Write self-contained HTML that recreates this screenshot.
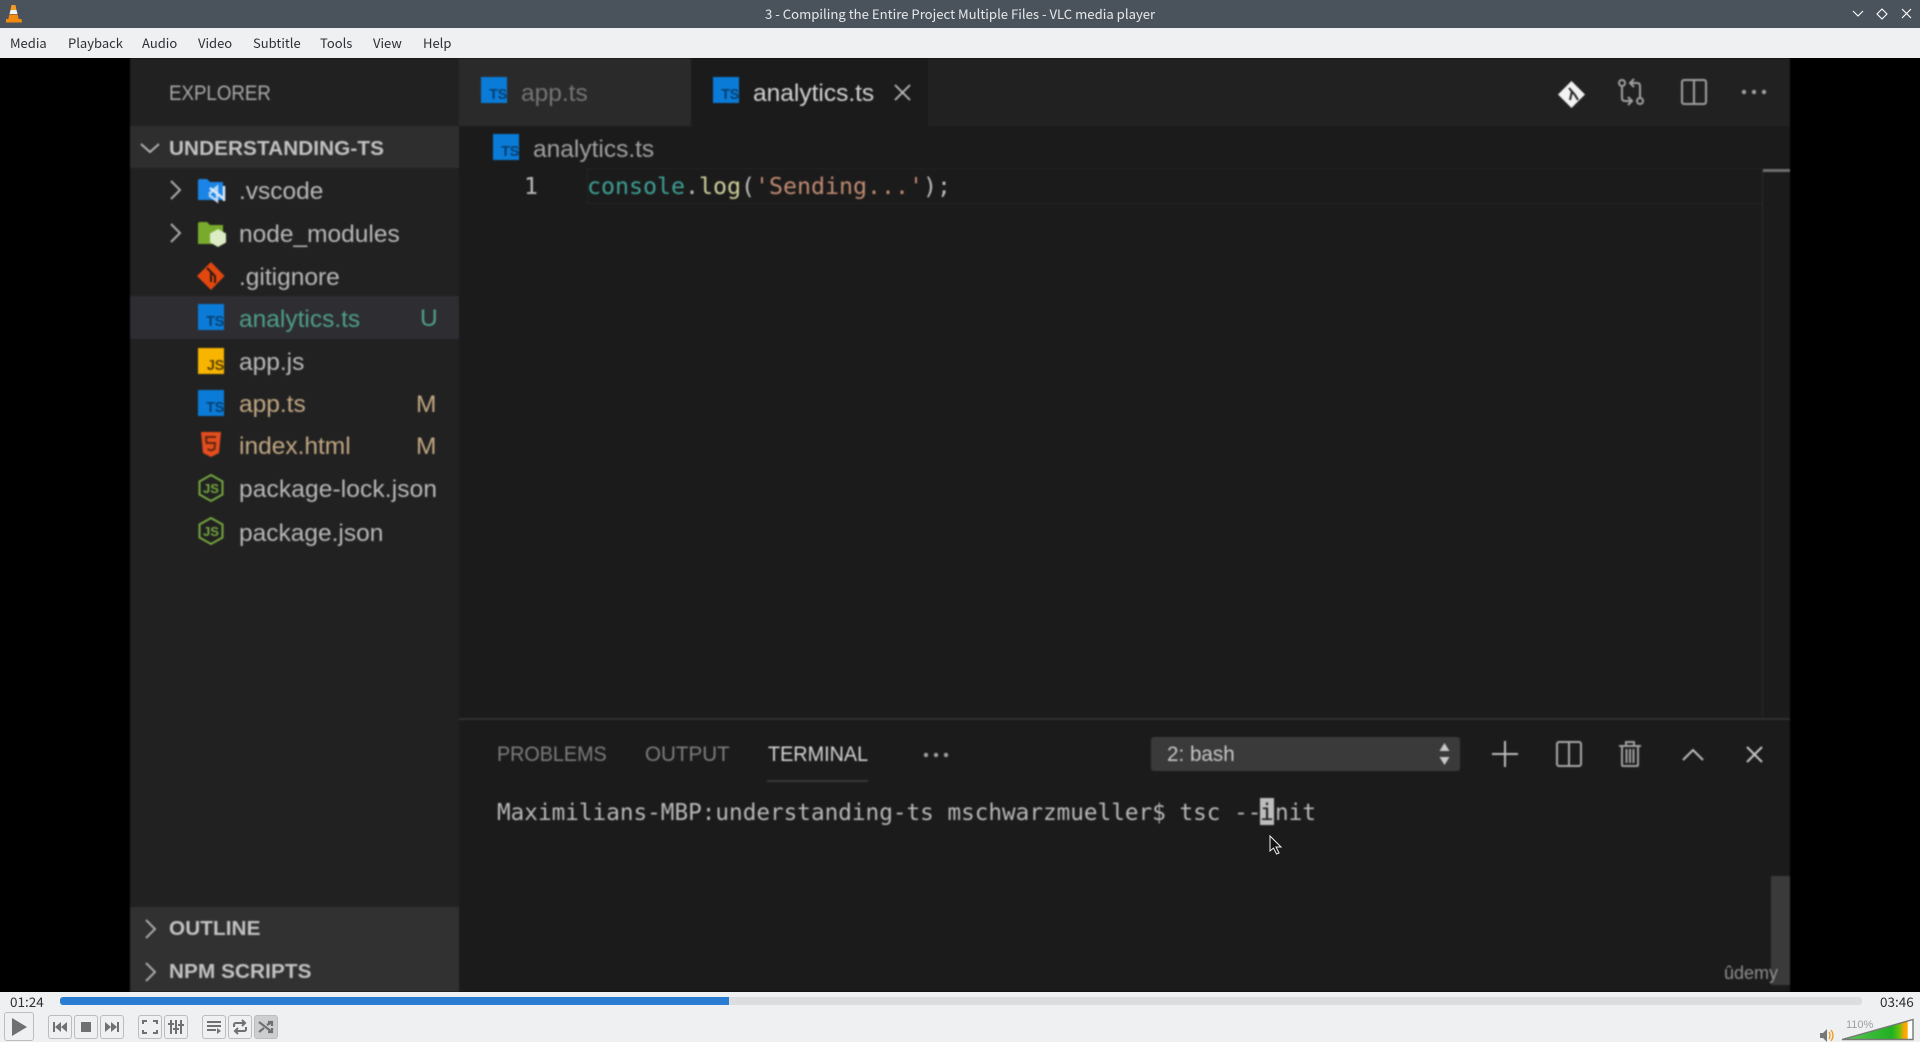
<!DOCTYPE html>
<html><head><meta charset="utf-8"><style>
html,body{margin:0;padding:0;width:1920px;height:1042px;overflow:hidden;background:#eff0f1}
*{box-sizing:border-box}
.a{position:absolute;white-space:nowrap}
.ui{font-family:"Noto Sans CJK JP","DejaVu Sans",sans-serif;font-size:13px;color:#2c3034;line-height:16px}
#v{position:absolute;left:0;top:58px;width:1920px;height:934px;background:#000;overflow:hidden}
#vi{position:absolute;left:0;top:-58px;width:1920px;height:1042px;filter:blur(.75px)}
.s{font-family:"Liberation Sans",sans-serif;font-size:24.500px;line-height:30px;color:#b8b8b8}
.h{font-weight:bold;font-size:20.700px;color:#c2c2c2;line-height:26px;letter-spacing:.1px}
.c{transform-origin:0 50%}
.m{font-family:"DejaVu Sans Mono",monospace}
.ts{position:absolute;width:26px;height:26px;background:#0a7cd8;color:#07406f;font:bold 14.500px/13px "Liberation Sans",sans-serif;text-align:right;padding:12px 0 0 0;letter-spacing:-.3px}
.btn{position:absolute;width:24px;height:24px;border:1px solid #bdbdbd;border-radius:3px;background:#eff0f1;top:1015px}
svg{position:absolute;overflow:visible}
</style></head><body>
<div class="a" style="left:0;top:0;width:1920px;height:28px;background:#4a535c"></div>
<svg style="left:6px;top:5px" width="16" height="18" viewBox="0 0 16 18"><path d="M5.500 0h4l1 5h-6z" fill="#f59a23"/><path d="M4.500 5h6l1 4h-8z" fill="#f3f3f3"/><path d="M3.300 9.500h8.400l1 4.500h-10.400z" fill="#f28a10"/><path d="M0 14h15.500l.5 3.500h-16z" fill="#f28a10"/></svg>
<div class="a ui" style="left:765px;top:6px;color:#e6e8ea;font-size:13.150px">3 - Compiling the Entire Project Multiple Files - VLC media player</div>
<svg style="left:1852px;top:8px" width="60" height="12" fill="none" stroke="#fff" stroke-width="1.100"><path d="M1 3l5 5 5-5"/><path d="M30 1l5 5-5 5-5-5z"/><path d="M50 1l9 9M59 1l-9 9"/></svg>
<div class="a" style="left:0;top:28px;width:1920px;height:30px;background:#eff0f1"></div>
<div class="a ui" style="left:10px;top:35px">Media</div>
<div class="a ui" style="left:68px;top:35px">Playback</div>
<div class="a ui" style="left:142px;top:35px">Audio</div>
<div class="a ui" style="left:198px;top:35px">Video</div>
<div class="a ui" style="left:253px;top:35px">Subtitle</div>
<div class="a ui" style="left:320px;top:35px">Tools</div>
<div class="a ui" style="left:373px;top:35px">View</div>
<div class="a ui" style="left:423px;top:35px">Help</div>

<div id="v"><div id="vi">
<div class="a" style="left:130px;top:58px;width:330px;height:934px;background:#212121"></div>
<div class="a" style="left:459px;top:58px;width:1331px;height:934px;background:#1b1b1b"></div>
<div class="a" style="left:459px;top:58px;width:1331px;height:68px;background:#212121"></div>
<div class="a" style="left:459px;top:58px;width:232px;height:68px;background:#2a2a2a"></div>
<div class="a" style="left:691px;top:58px;width:237px;height:68px;background:#1b1b1b"></div>

<div class="a s c" style="left:169px;top:79px;font-size:21.500px;line-height:28px;color:#a8a8a8;transform:scaleX(.87)">EXPLORER</div>
<div class="a" style="left:130px;top:126px;width:329px;height:42px;background:#2e2e2e"></div>
<svg style="left:140px;top:142px" width="20" height="12" fill="none" stroke="#b0b0b0" stroke-width="2"><path d="M1 2l9 8 9-8"/></svg>
<div class="a s h" style="left:169px;top:136px">UNDERSTANDING-TS</div>

<svg style="left:170px;top:180px" width="11" height="20" fill="none" stroke="#aaa" stroke-width="2"><path d="M1 1l9 9-9 9"/></svg>
<svg style="left:198px;top:179px" width="29" height="24"><path d="M0 2q0-2 2-2h7l3 3h13v18h-25z" fill="#1a85e6"/><path d="M11 15l8-7v14l-8-6" fill="none" stroke="#bcd9f5" stroke-width="2.500"/><path d="M12 9l14 11M26 7v15" stroke="#d8e9fa" stroke-width="2.500" fill="none"/></svg>
<div class="a s" style="left:239px;top:177px">.vscode</div>
<svg style="left:170px;top:223px" width="11" height="20" fill="none" stroke="#aaa" stroke-width="2"><path d="M1 1l9 9-9 9"/></svg>
<svg style="left:198px;top:222px" width="29" height="24"><path d="M0 2q0-2 2-2h7l3 3h13v19h-25z" fill="#78ab2c"/><path d="M20 7l8 4.500v9l-8 4.500-8-4.500v-9z" fill="#dcecc4"/></svg>
<div class="a s" style="left:239px;top:220px">node_modules</div>
<svg style="left:197px;top:262px" width="28" height="28"><path d="M14 0l13.500 14-13.500 14-14-14z" fill="#e2470f"/><path d="M10 6l8 8v7M14 10v10" stroke="#2c1a12" stroke-width="2" fill="none"/></svg>
<div class="a s" style="left:239px;top:263px">.gitignore</div>

<div class="a" style="left:130px;top:296px;width:329px;height:43px;background:#2d2d32"></div>
<div class="ts" style="left:198px;top:304px">TS</div>
<div class="a s" style="left:239px;top:305px;color:#4f9f85">analytics.ts</div>
<div class="a s" style="left:420px;top:304px;color:#4f9f85">U</div>
<div class="ts" style="left:198px;top:348px;background:#f7b500;color:#5a4200">JS</div>
<div class="a s" style="left:239px;top:348px">app.js</div>
<div class="ts" style="left:198px;top:390px">TS</div>
<div class="a s" style="left:239px;top:390px;color:#c1a783">app.ts</div>
<div class="a s" style="left:416px;top:390px;color:#c1a783">M</div>
<svg style="left:201px;top:432px" width="20" height="25"><path d="M0 0h20l-2 21-8 4-8-4z" fill="#e44d1e"/><path d="M15 5h-10l.5 6h8.500l-.5 6-3.500 1.500-3.500-1.500" fill="none" stroke="#5f2712" stroke-width="2"/></svg>
<div class="a s" style="left:239px;top:432px;color:#c1a783">index.html</div>
<div class="a s" style="left:416px;top:432px;color:#c1a783">M</div>
<svg style="left:198px;top:474px" width="26" height="28" fill="none" stroke="#74a63e" stroke-width="2"><path d="M13 1l11.500 6.500v13l-11.500 6.500-11.500-6.500v-13z"/><text x="13" y="19" text-anchor="middle" stroke="none" fill="#74a63e" font-family="Liberation Sans" font-weight="bold" font-size="13">JS</text></svg>
<div class="a s" style="left:239px;top:475px;letter-spacing:.12px">package-lock.json</div>
<svg style="left:198px;top:517px" width="26" height="28" fill="none" stroke="#74a63e" stroke-width="2"><path d="M13 1l11.500 6.500v13l-11.500 6.500-11.500-6.500v-13z"/><text x="13" y="19" text-anchor="middle" stroke="none" fill="#74a63e" font-family="Liberation Sans" font-weight="bold" font-size="13">JS</text></svg>
<div class="a s" style="left:239px;top:519px">package.json</div>

<div class="a" style="left:130px;top:907px;width:329px;height:85px;background:#313131"></div>
<svg style="left:145px;top:919px" width="11" height="20" fill="none" stroke="#a8a8a8" stroke-width="2"><path d="M1 1l9 9-9 9"/></svg>
<div class="a s h" style="left:169px;top:916px">OUTLINE</div>
<svg style="left:145px;top:962px" width="11" height="20" fill="none" stroke="#a8a8a8" stroke-width="2"><path d="M1 1l9 9-9 9"/></svg>
<div class="a s h" style="left:169px;top:959px">NPM SCRIPTS</div>

<div class="ts" style="left:481px;top:77px">TS</div>
<div class="a s" style="left:521px;top:79px;color:#757575">app.ts</div>
<div class="ts" style="left:713px;top:77px">TS</div>
<div class="a s" style="left:753px;top:79px;color:#d2d2d2">analytics.ts</div>
<svg style="left:894px;top:84px" width="17" height="17" fill="none" stroke="#bbb" stroke-width="1.800"><path d="M1 1l15 15M16 1l-15 15"/></svg>

<svg style="left:1558px;top:81px" width="27" height="27"><path d="M13.500 0l13.500 13.500-13.500 13.500-13.500-13.500z" fill="#f2f2f2"/><path d="M11 7l6 7M14 10l-2 9M17 14l3 5" stroke="#222" stroke-width="2" fill="none"/></svg>
<svg style="left:1618px;top:79px" width="26" height="26" fill="none" stroke="#a0a0a0" stroke-width="2"><circle cx="4" cy="4" r="3"/><circle cx="22" cy="22" r="3"/><path d="M4 7v12q0 3 3 3h7M10 18l4 4-4 4M22 19v-12q0-3-3-3h-6M16 0l-4 4 4 4"/></svg>
<svg style="left:1681px;top:79px" width="26" height="26" fill="none" stroke="#a0a0a0" stroke-width="2"><rect x="1" y="1" width="24" height="24" rx="2"/><path d="M13 1v24"/></svg>
<svg style="left:1740px;top:88px" width="28" height="8" fill="#a0a0a0"><circle cx="4" cy="4" r="2.200"/><circle cx="14" cy="4" r="2.200"/><circle cx="24" cy="4" r="2.200"/></svg>

<div class="ts" style="left:493px;top:134px">TS</div>
<div class="a s" style="left:533px;top:135px;color:#a0a0a0">analytics.ts</div>
<div class="a" style="left:587px;top:168px;width:1176px;height:36px;border:1px solid #242424;border-right:0"></div>
<div class="a" style="left:1762px;top:170px;width:1px;height:548px;background:#2a2a2a"></div>
<div class="a" style="left:1763px;top:169px;width:27px;height:3px;background:#6e6e6e"></div>
<div class="a m" style="left:524px;top:173px;font-size:23.250px;line-height:28px;color:#bcbcbc">1</div>
<div class="a m" style="left:587px;top:173px;font-size:23.250px;line-height:28px;color:#bcbcbc"><span style="color:#3f9f95">console</span>.<span style="color:#cfcf9c">log</span>(<span style="color:#c08a72">'Sending...'</span>);</div>

<div class="a" style="left:459px;top:718px;width:1331px;height:2px;background:#303030"></div>
<div class="a s c" style="left:497px;top:739px;font-size:21.500px;color:#7d7d7d;transform:scaleX(.918)">PROBLEMS</div>
<div class="a s c" style="left:645px;top:739px;font-size:21.500px;color:#7d7d7d;transform:scaleX(.958)">OUTPUT</div>
<div class="a s c" style="left:768px;top:739px;font-size:21.500px;color:#d4d4d4;transform:scaleX(.921)">TERMINAL</div>
<div class="a" style="left:767px;top:780px;width:101px;height:2px;background:#383838"></div>
<svg style="left:922px;top:751px" width="28" height="8" fill="#a0a0a0"><circle cx="4" cy="4" r="2.200"/><circle cx="14" cy="4" r="2.200"/><circle cx="24" cy="4" r="2.200"/></svg>
<div class="a" style="left:1151px;top:737px;width:309px;height:34px;background:#3a3a3a;border-radius:3px"></div>
<div class="a s c" style="left:1167px;top:739px;font-size:21.500px;color:#c8c8c8;transform:scaleX(.96)">2: bash</div>
<svg style="left:1439px;top:743px" width="11" height="22" fill="#c8c8c8"><path d="M5.500 0l5 8h-10zM5.500 22l5-8h-10z"/></svg>
<svg style="left:1492px;top:741px" width="26" height="26" stroke="#bdbdbd" stroke-width="2"><path d="M13 0v26M0 13h26"/></svg>
<svg style="left:1556px;top:741px" width="26" height="26" fill="none" stroke="#a8a8a8" stroke-width="2"><rect x="1" y="1" width="24" height="24" rx="2"/><path d="M13 1v24"/></svg>
<svg style="left:1619px;top:741px" width="22" height="26" fill="none" stroke="#a0a0a0" stroke-width="2"><path d="M0 5h22M7 5v-4h8v4M3 5v19q0 1 1 1h14q1 0 1-1v-19M7.500 8v14M11 8v14M14.500 8v14"/></svg>
<svg style="left:1682px;top:748px" width="22" height="13" fill="none" stroke="#bdbdbd" stroke-width="2"><path d="M1 12l10-10 10 10"/></svg>
<svg style="left:1746px;top:746px" width="17" height="17" fill="none" stroke="#c4c4c4" stroke-width="2"><path d="M1 1l15 15M16 1l-15 15"/></svg>
<div class="a m" style="left:497px;top:799px;font-size:22.680px;line-height:28px;color:#b8b8b8">Maximilians-MBP:understanding-ts mschwarzmueller$ tsc --init</div>
<div class="a" style="left:1260px;top:798px;width:14px;height:27px;background:#bdbdbd"></div>
<div class="a m" style="left:1260px;top:799px;font-size:22.680px;line-height:28px;color:#1b1b1b">i</div>
<div class="a" style="left:1771px;top:876px;width:19px;height:109px;background:#3a3a3a"></div>
<div class="a s" style="left:1724px;top:962px;font-size:18px;line-height:22px;color:#8f8f8f">ûdemy</div>
</div></div>
<svg style="left:1269px;top:835px" width="14" height="22"><path d="M1 1v15l3.500-3 3 6 2.500-1-3-6h5z" fill="#111" stroke="#eee" stroke-width="1"/></svg>

<div class="a ui" style="left:10px;top:993px;font-size:13.500px">01:24</div>
<div class="a ui" style="left:1880px;top:993px;font-size:13.500px">03:46</div>
<div class="a" style="left:60px;top:997px;width:1802px;height:8px;border-radius:3px;background:#dcdddf"></div>
<div class="a" style="left:60px;top:997px;width:669px;height:8px;border-radius:3px 0 0 3px;background:#2a7dd2"></div>

<div class="btn" style="left:4px;top:1012px;width:30px;height:29px"></div>
<svg style="left:12px;top:1018px" width="15" height="18"><path d="M0 0l15 9-15 9z" fill="#6f7072"/></svg>
<div class="btn" style="left:48px"></div><svg style="left:53px;top:1022px" width="14" height="10" fill="#6f7072"><path d="M0 0h2v10h-2zM8 0v10l-6-5zM14 0v10l-6-5z"/></svg>
<div class="btn" style="left:74px"></div><div class="a" style="left:81px;top:1022px;width:10px;height:10px;background:#6f7072"></div>
<div class="btn" style="left:100px"></div><svg style="left:105px;top:1022px" width="14" height="10" fill="#6f7072"><path d="M0 0v10l6-5zM6 0v10l6-5zM12 0h2v10h-2z"/></svg>
<div class="btn" style="left:138px"></div><svg style="left:142px;top:1020px" width="16" height="14" fill="none" stroke="#6f7072" stroke-width="2"><path d="M1 4v-3h4M11 1h4v3M15 10v3h-4M5 13h-4v-3"/></svg>
<div class="btn" style="left:164px"></div><svg style="left:168px;top:1020px" width="16" height="14" stroke="#6f7072" stroke-width="2" fill="none"><path d="M3 0v14M8 0v14M13 0v14M0 4h6M5 9h6M10 5h6"/></svg>
<div class="btn" style="left:202px"></div><svg style="left:207px;top:1021px" width="14" height="12" fill="#6f7072"><path d="M0 0h14v2h-14zM0 4h14v2h-14zM0 8h9v2h-9zM10 7l4 3-4 3z"/></svg>
<div class="btn" style="left:228px"></div><svg style="left:233px;top:1020px" width="14" height="14" fill="none" stroke="#6f7072" stroke-width="2"><path d="M1 7v-2q0-2 2-2h8M9 0l3 3-3 3M13 7v2q0 2-2 2h-8M5 8l-3 3 3 3"/></svg>
<div class="btn" style="left:254px;background:#cdcecf"></div><svg style="left:259px;top:1021px" width="14" height="12" fill="none" stroke="#6f7072" stroke-width="2.200"><path d="M0 1l13 10M0 11l5-4M8 4l5-3M9 1h4v4M9 11h4v-4"/></svg>

<svg style="left:1820px;top:1029px" width="14" height="13" fill="none"><path d="M0 4h3l4-4v13l-4-4h-3z" fill="#777"/><path d="M9 3q2 3.500 0 7M11 1q4 5.500 0 11" stroke="#f39a1f" stroke-width="1.300"/></svg>
<div class="a" style="left:1846px;top:1019px;font:11px/12px 'Liberation Sans',sans-serif;color:#9da0a4">110%</div>
<svg style="left:1841px;top:1019px" width="73" height="22"><defs><linearGradient id="g" x1="0" x2="1"><stop offset="0" stop-color="#5ac85a"/><stop offset=".7" stop-color="#20b020"/><stop offset=".8" stop-color="#60c010"/><stop offset=".88" stop-color="#ffa500"/><stop offset=".92" stop-color="#ffb000"/><stop offset=".93" stop-color="#fff"/></linearGradient></defs><path d="M1 20.500l71-20v20z" fill="url(#g)" stroke="#777" stroke-width="1.400"/></svg>
</body></html>
